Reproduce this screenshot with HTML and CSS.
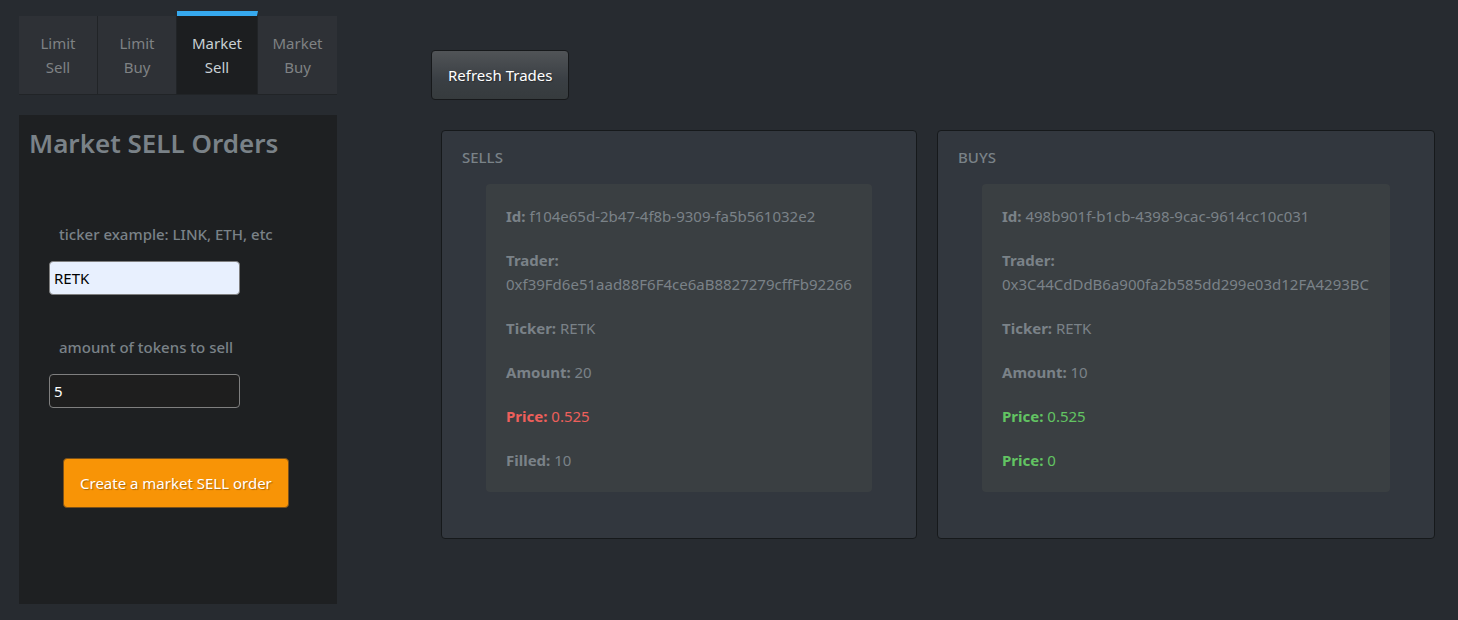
FILE: index.html
```html
<!DOCTYPE html>
<html lang="en">
<head>
<meta charset="utf-8">
<title>Market SELL Orders</title>
<link rel="stylesheet" href="styles.css">
</head>
<body>
<main class="exchange">
  <section class="orders">
    <nav class="tabs">
      <a class="tab" href="#limit-sell">Limit Sell</a>
      <a class="tab" href="#limit-buy">Limit Buy</a>
      <a class="tab tab-active" href="#market-sell" aria-current="page">Market Sell</a>
      <a class="tab" href="#market-buy">Market Buy</a>
    </nav>
    <form class="order-form" id="market-sell">
      <h1 class="form-title">Market SELL Orders</h1>
      <div class="field">
        <label class="field-label" for="ticker">ticker example: LINK, ETH, etc</label>
        <input class="field-input field-filled" id="ticker" type="text" value="RETK">
      </div>
      <div class="field">
        <label class="field-label" for="amount">amount of tokens to sell</label>
        <input class="field-input" id="amount" type="text" value="5">
      </div>
      <button class="button button-warning" type="button">Create a market SELL order</button>
    </form>
  </section>
  <section class="trades">
    <button class="button button-plain" type="button">Refresh Trades</button>
    <div class="books">
      <section class="book">
        <h2 class="book-title">SELLS</h2>
        <article class="trade">
          <p><b>Id:</b> f104e65d-2b47-4f8b-9309-fa5b561032e2</p>
          <p><b>Trader:</b><br>0xf39Fd6e51aad88F6F4ce6aB8827279cffFb92266</p>
          <p><b>Ticker:</b> RETK</p>
          <p><b>Amount:</b> 20</p>
          <p class="price-sell"><b>Price:</b> 0.525</p>
          <p><b>Filled:</b> 10</p>
        </article>
      </section>
      <section class="book">
        <h2 class="book-title">BUYS</h2>
        <article class="trade">
          <p><b>Id:</b> 498b901f-b1cb-4398-9cac-9614cc10c031</p>
          <p><b>Trader:</b><br>0x3C44CdDdB6a900fa2b585dd299e03d12FA4293BC</p>
          <p><b>Ticker:</b> RETK</p>
          <p><b>Amount:</b> 10</p>
          <p class="price-buy"><b>Price:</b> 0.525</p>
          <p class="price-buy"><b>Price:</b> 0</p>
        </article>
      </section>
    </div>
  </section>
</main>
</body>
</html>
```
FILE: styles.css
```css
* {
  box-sizing: border-box;
}

body {
  margin: 0;
  min-height: 100vh;
  background: #272b30;
  color: #7a8288;
  font-family: "Segoe UI", "Noto Sans", sans-serif;
  font-size: 15px;
  line-height: 24px;
}

h1, h2, p {
  margin: 0;
}

.exchange {
  display: grid;
  grid-template-columns: 318fr 1004fr;
  gap: 94px;
  padding: 11px 23px 16px 19px;
}

.tabs {
  display: flex;
  align-items: flex-end;
  margin-bottom: 20px;
}

.tab {
  flex: 1 1 79px;
  padding: 15px 12px;
  background: #2e3136;
  border-right: 1px solid #212427;
  border-bottom: 1px solid #212427;
  color: #7f8284;
  text-align: center;
  text-decoration: none;
}

.tab:last-child {
  border-right: 0;
}

.tab-active {
  flex-basis: 81px;
  background: #1c1e20;
  border-top: 5px solid #36a9ee;
  color: #c8d0d4;
}

.order-form {
  display: flex;
  flex-direction: column;
  align-items: flex-start;
  min-height: 489px;
  padding: 10px 10px 96px;
  background: #1e2022;
}

.form-title {
  margin-bottom: 61px;
  font-size: 26px;
  font-weight: 600;
  line-height: 36px;
}

.field {
  display: flex;
  flex-direction: column;
  align-items: flex-start;
  gap: 15px;
  margin: 0 20px 40px;
}

.field-label {
  padding: 0 10px;
  font-weight: 500;
}

.field-input {
  width: 191px;
  max-width: 100%;
  height: 34px;
  padding: 0 4px;
  border: 1px solid #7f7f7f;
  border-radius: 4px;
  background: #1e1e1e;
  color: #fff;
  font: inherit;
}

.field-filled {
  background: #e8f0fe;
  color: #000;
}

.button {
  padding: 12px 16px;
  border: 1px solid #17191b;
  border-radius: 4px;
  color: #fff;
  font: inherit;
  text-shadow: 1px 1px 1px rgba(0, 0, 0, 0.3);
}

.button-warning {
  margin: 10px 0 0 34px;
  border-color: #79501a;
  background: #f89406;
}

.button-plain {
  background: linear-gradient(#515457, #3a3f44 60%, #363b3d);
}

.trades {
  padding-top: 39px;
}

.books {
  display: grid;
  grid-template-columns: 476fr 498fr;
  gap: 20px;
  margin: 30px 0 0 10px;
}

.book {
  padding: 14px 20px 46px;
  border: 1px solid #16191b;
  border-radius: 4px;
  background: #32373e;
}

.book-title {
  margin-bottom: 15px;
  font-size: 15px;
  font-weight: 500;
  line-height: 24px;
}

.trade {
  display: grid;
  gap: 20px;
  margin: 0 24px;
  padding: 20px;
  border-radius: 4px;
  background: #3a3f42;
}

.price-sell {
  color: #ee5f5b;
}

.price-buy {
  color: #62c462;
}
```
